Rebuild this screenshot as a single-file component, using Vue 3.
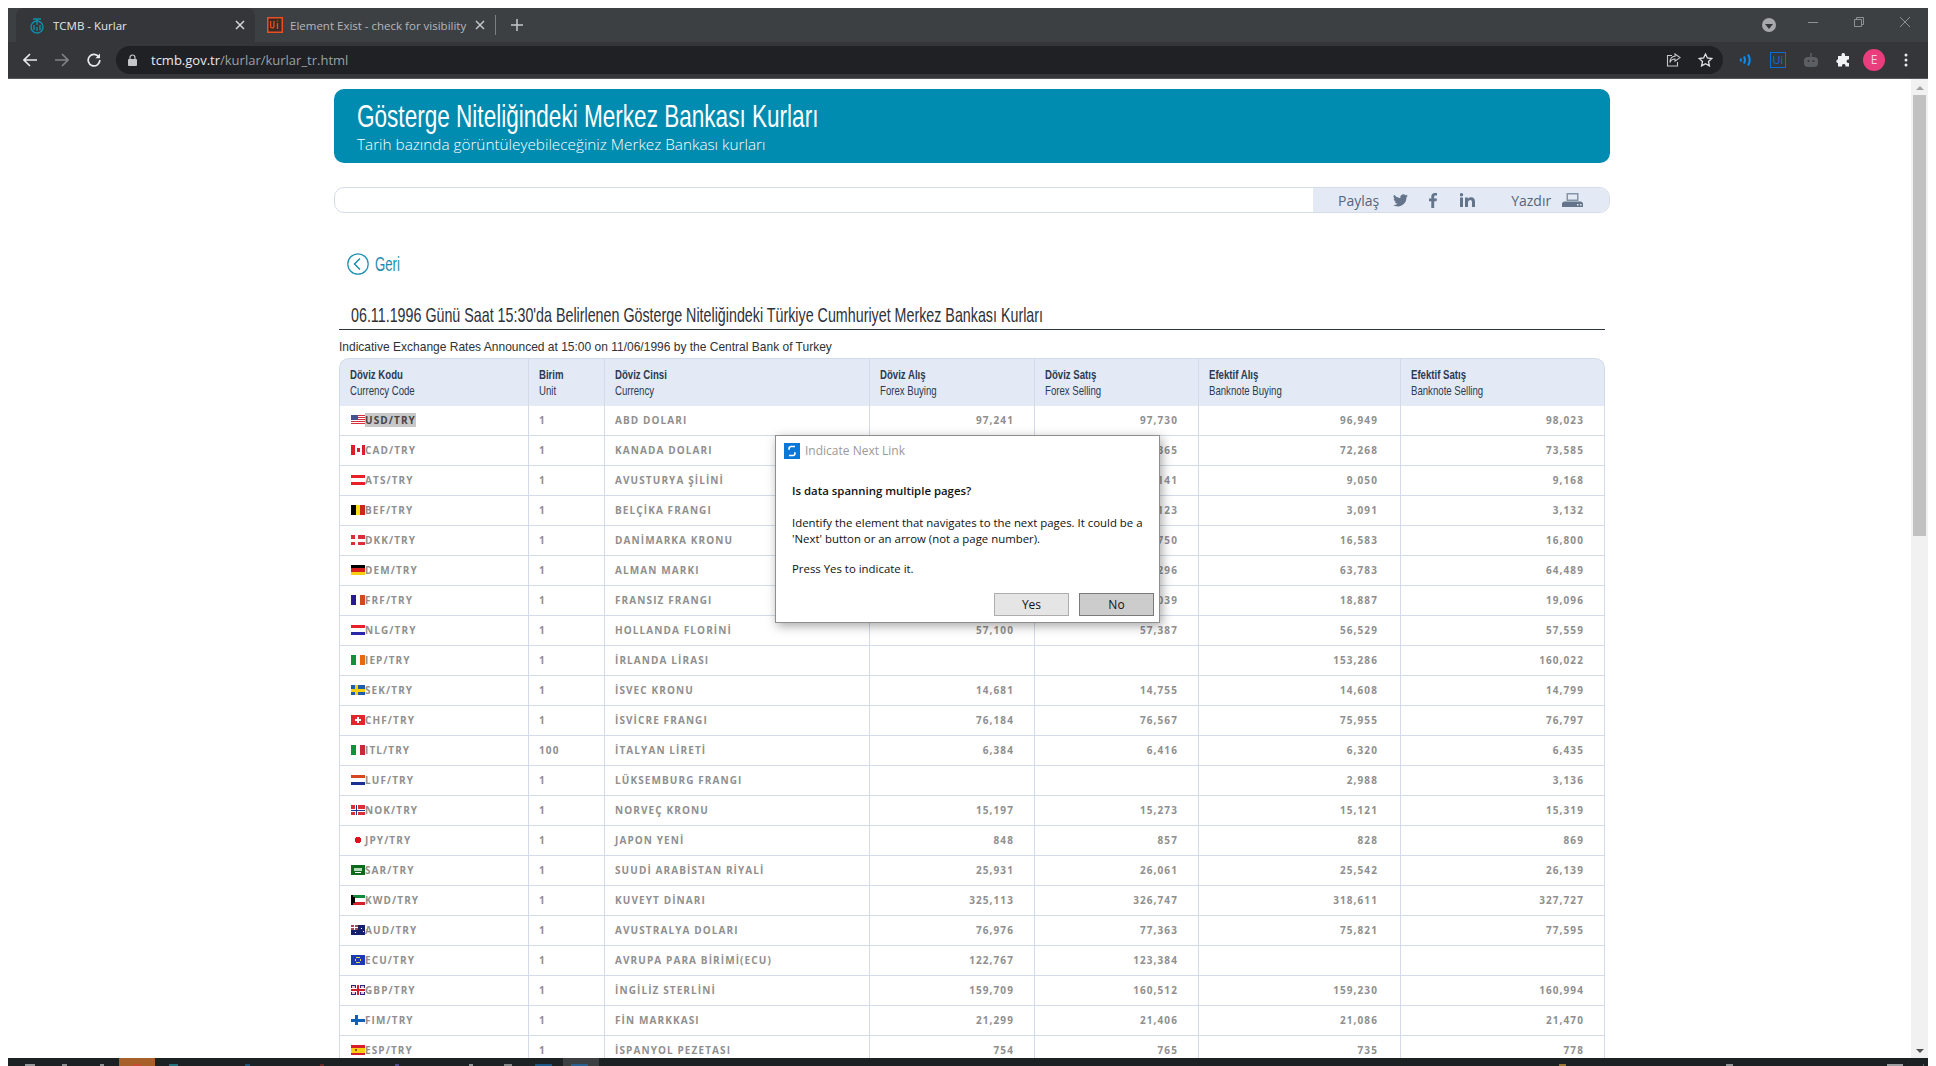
<template>
  <div class="window">
    <header class="chrome">
      <div class="tabstrip">
        <div class="tab active">
          <svg class="favicon" width="18" height="18" viewBox="0 0 18 18" fill="none" stroke="#0e8fa8" stroke-width="1.4">
            <circle cx="9" cy="11" r="6" />
            <path d="M5 3h8M9 3v6M6 9v5M12 9v5M9 11v4" />
          </svg>
          <span class="tab-title">TCMB - Kurlar</span>
          <svg class="tab-x" width="10" height="10" viewBox="0 0 10 10" stroke="#d5d7da" stroke-width="1.5"><path d="M1 1l8 8M9 1l-8 8" /></svg>
        </div>
        <div class="tab">
          <svg class="favicon" width="16" height="16" viewBox="0 0 16 16">
            <rect x="0.75" y="0.75" width="14.5" height="14.5" fill="#3b2a22" stroke="#e8501f" stroke-width="1.5" />
            <path d="M3.6 4v5.2c0 2.2 3.4 2.2 3.4 0V4" fill="none" stroke="#e8501f" stroke-width="1.3" />
            <path d="M10.5 6v6M10.5 3.6v1" fill="none" stroke="#e8501f" stroke-width="1.3" />
          </svg>
          <span class="tab-title dim">Element Exist - check for visibility</span>
          <svg class="tab-x" width="10" height="10" viewBox="0 0 10 10" stroke="#c4c7ca" stroke-width="1.5"><path d="M1 1l8 8M9 1l-8 8" /></svg>
        </div>
        <span class="tab-sep"></span>
        <svg class="new-tab" width="12" height="12" viewBox="0 0 12 12" stroke="#c4c7ca" stroke-width="1.5"><path d="M6 0v12M0 6h12" /></svg>
        <div class="win-controls">
          <span class="media-btn"><i></i></span>
          <svg width="10" height="10" viewBox="0 0 10 10" stroke="#8e9194"><path d="M0 5.5h10" /></svg>
          <svg width="10" height="10" viewBox="0 0 10 10" fill="none" stroke="#8e9194"><path d="M.5 2.5h7v7h-7zM2.5 2.5v-2h7v7h-2" /></svg>
          <svg width="10" height="10" viewBox="0 0 10 10" stroke="#8e9194"><path d="M0 0l10 10M10 0L0 10" /></svg>
        </div>
      </div>
      <div class="toolbar">
        <svg width="14" height="14" viewBox="0 0 14 14" fill="none" stroke="#e8eaed" stroke-width="1.6"><path d="M14 7H1.5M7 1L1 7l6 6" /></svg>
        <svg width="14" height="14" viewBox="0 0 14 14" fill="none" stroke="#7f8388" stroke-width="1.6"><path d="M0 7h12.5M7 1l6 6-6 6" /></svg>
        <svg width="14" height="14" viewBox="0 0 14 14" fill="none" stroke="#e8eaed" stroke-width="1.7"><path d="M12 4.2A5.8 5.8 0 1 0 12.8 7" /><path d="M13 .6v4.6H8.4z" fill="#e8eaed" stroke="none" /></svg>
        <div class="omnibox">
          <svg width="9" height="12" viewBox="0 0 9 12"><path d="M2 5V3.5a2.500 2.500 0 0 1 5 0V5" fill="none" stroke="#c4c7ca" stroke-width="1.2" /><rect y="5" width="9" height="7" rx="1" fill="#c4c7ca" /></svg>
          <span class="url"><b>tcmb.gov.tr</b>/kurlar/kurlar_tr.html</span>
          <svg class="share" width="15" height="14" viewBox="0 0 15 14" fill="none" stroke="#c4c7ca" stroke-width="1.1"><path d="M6 2.5H1.5v10.5h10V9" /><path d="M9 1l5 3.6-5 3.6V6C6.500 6 4.800 7 4 9.500 4 6 6 3.500 9 3.300z" /></svg>
          <svg width="15" height="14" viewBox="0 0 15 14" fill="none" stroke="#dfe1e4" stroke-width="1.3"><path d="M7.500 1l1.900 4 4.400.5-3.300 3 .9 4.400-3.900-2.200-3.900 2.200.9-4.400-3.300-3L5.600 5z" /></svg>
        </div>
        <div class="extensions">
          <svg width="14" height="14" viewBox="0 0 14 14" fill="none" stroke="#0a8cf0" stroke-width="2"><path d="M1.500 5.500q1 1.500 0 3M5 3.500q2 3.500 0 7M9 1.500q3.500 5.500 0 11" /></svg>
          <span class="ui-ext">Ui</span>
          <svg width="16" height="16" viewBox="0 0 16 16"><rect x="1" y="5" width="14" height="10" rx="4" fill="#5b5e62" /><rect x="7.200" y="1" width="1.600" height="4" fill="#5b5e62" /><circle cx="5.500" cy="9" r="1" fill="#35363a" /><circle cx="10.500" cy="9" r="1" fill="#35363a" /></svg>
          <svg width="15" height="15" viewBox="0 0 15 15" fill="#f1f3f4"><path d="M5.500 1.500a1.800 1.800 0 0 1 3.500 0V3h4v3.500h-1a1.800 1.800 0 0 0 0 3.500h1V13.500H9.500v-1a1.800 1.800 0 0 0-3.500 0v1H2V10h-.3a1.800 1.800 0 0 1 0-3.500H2V3h3.500z" /></svg>
          <span class="avatar">E</span>
          <svg class="menu-dots" width="4" height="14" viewBox="0 0 4 14" fill="#e8eaed"><circle cx="2" cy="2" r="1.500" /><circle cx="2" cy="7" r="1.500" /><circle cx="2" cy="12" r="1.500" /></svg>
        </div>
      </div>
    </header>

    <div class="viewport">
      <main class="page">
        <section class="banner">
          <h1>Gösterge Niteliğindeki Merkez Bankası Kurları</h1>
          <p>Tarih bazında görüntüleyebileceğiniz Merkez Bankası kurları</p>
        </section>

        <div class="sharebar">
          <div class="share-tools">
            <span>Paylaş</span>
            <svg class="tw" width="15" height="13" viewBox="0 0 24 20" fill="#64748a"><path d="M24 2.400a9.800 9.800 0 0 1-2.800.8A4.900 4.900 0 0 0 23.300.500a9.800 9.800 0 0 1-3.100 1.200 4.900 4.900 0 0 0-8.400 4.500A14 14 0 0 1 1.700.900a4.900 4.900 0 0 0 1.500 6.600 4.900 4.900 0 0 1-2.200-.6c0 2.400 1.700 4.400 3.900 4.900a4.900 4.900 0 0 1-2.200.1 4.900 4.900 0 0 0 4.600 3.400A9.900 9.900 0 0 1 0 17.300 14 14 0 0 0 21.500 4.900 10 10 0 0 0 24 2.400z" /></svg>
            <svg class="fb" width="8" height="15" viewBox="0 0 8 15" fill="#64748a"><path d="M2.300 15V8.300H0V5.600h2.300V3.700C2.300 1.300 3.700 0 5.800 0H8v2.600H6.500c-1 0-1.300.6-1.300 1.300v1.700H8l-.4 2.700H5.200V15z" /></svg>
            <svg class="in" width="15" height="14" viewBox="0 0 15 14" fill="#64748a"><rect y="4.500" width="3" height="9.500" /><circle cx="1.500" cy="1.700" r="1.700" /><path d="M5 4.500h2.900v1.300c.6-1 1.700-1.600 3-1.600 2.900 0 4.100 1.700 4.100 4.500V14h-3V9.200c0-1.300-.4-2.300-1.600-2.300S8 7.900 8 9.200V14H5z" /></svg>
            <span class="print-label">Yazdır</span>
            <svg width="21" height="14" viewBox="0 0 21 14"><path d="M4.500 0h12v8h-12z" fill="#8593a6" /><path d="M6 1.500h9v5H6z" fill="#e4eaf5" /><path d="M2 8.500h17l2 1.500v4H0v-4z" fill="#64748a" /><rect x="15" y="11" width="1.500" height="1.500" fill="#e4eaf5" /><rect x="18" y="11" width="1.500" height="1.500" fill="#e4eaf5" /></svg>
          </div>
        </div>

        <a class="back">
          <svg width="22" height="22" viewBox="0 0 22 22" fill="none" stroke="#1a8db0" stroke-width="1.200"><circle cx="11" cy="11" r="10.200" /><path d="M13 5.500L7.500 11l5.500 5.500" stroke-width="1.500" /></svg>
          <span>Geri</span>
        </a>

        <div class="rate-title">
          <h2>06.11.1996 Günü Saat 15:30'da Belirlenen Gösterge Niteliğindeki Türkiye Cumhuriyet Merkez Bankası Kurları</h2>
        </div>
        <p class="rate-sub">Indicative Exchange Rates Announced at 15:00 on 11/06/1996 by the Central Bank of Turkey</p>

        <table class="rates">
          <colgroup>
            <col v-for="w in colWidths" :key="w.id" :style="{ width: w.px + 'px' }" />
          </colgroup>
          <thead>
            <tr>
              <th v-for="h in headers" :key="h.tr">
                <strong>{{ h.tr }}</strong>
                <span>{{ h.en }}</span>
              </th>
            </tr>
          </thead>
          <tbody>
            <tr v-for="r in rows" :key="r.code">
              <td class="code">
                <div class="code-cell">
                  <svg class="flag" width="14" height="10" viewBox="0 0 14 10" shape-rendering="crispEdges">
                    <rect v-for="(s, i) in flags[r.code]" :key="i" :x="s[0]" :y="s[1]" :width="s[2]" :height="s[3]" :fill="s[4]" />
                  </svg>
                  <span :class="{ picked: r.code === 'USD' }">{{ r.code }}/TRY</span>
                </div>
              </td>
              <td>{{ r.unit }}</td>
              <td>{{ r.name }}</td>
              <td class="num">{{ r.fb }}</td>
              <td class="num">{{ r.fs }}</td>
              <td class="num">{{ r.bb }}</td>
              <td class="num">{{ r.bs }}</td>
            </tr>
          </tbody>
        </table>
      </main>

      <div class="scrollbar">
        <span class="arrow up"></span>
        <span class="thumb"></span>
        <span class="arrow down"></span>
      </div>

      <div class="dialog">
        <div class="dialog-title">
          <svg width="16" height="16" viewBox="0 0 16 16">
            <rect width="16" height="16" fill="#0a78d8" />
            <path d="M11 3.500H7a2 2 0 0 0-1.500 3.300M5 12.500h4a2 2 0 0 0 1.500-3.300" fill="none" stroke="#fff" stroke-width="1.700" />
          </svg>
          <span>Indicate Next Link</span>
        </div>
        <div class="dialog-body">
          <p><b>Is data spanning multiple pages?</b></p>
          <p>Identify the element that navigates to the next pages. It could be a 'Next' button or an arrow (not a page number).</p>
          <p>Press Yes to indicate it.</p>
        </div>
        <div class="dialog-actions">
          <button>Yes</button>
          <button class="focused">No</button>
        </div>
      </div>
    </div>

    <footer class="taskbar">
      <span class="task-cell orange"></span>
      <span class="task-cell open"></span>
      <span
        v-for="b in trayBits"
        :key="b.x"
        class="task-bit"
        :style="{ left: b.x + 'px', width: b.w + 'px', background: b.c }"
      ></span>
    </footer>
  </div>
</template>

<script setup>
const colWidths = [
  { id: 'code', px: 190 },
  { id: 'unit', px: 76 },
  { id: 'name', px: 265 },
  { id: 'fb', px: 165 },
  { id: 'fs', px: 164 },
  { id: 'bb', px: 202 },
  { id: 'bs', px: 204 }
]

const headers = [
  { tr: 'Döviz Kodu', en: 'Currency Code' },
  { tr: 'Birim', en: 'Unit' },
  { tr: 'Döviz Cinsi', en: 'Currency' },
  { tr: 'Döviz Alış', en: 'Forex Buying' },
  { tr: 'Döviz Satış', en: 'Forex Selling' },
  { tr: 'Efektif Alış', en: 'Banknote Buying' },
  { tr: 'Efektif Satış', en: 'Banknote Selling' }
]

const rows = [
  { code: 'USD', unit: 1, name: 'ABD DOLARI', fb: '97,241', fs: '97,730', bb: '96,949', bs: '98,023' },
  { code: 'CAD', unit: 1, name: 'KANADA DOLARI', fb: '72,000', fs: '72,365', bb: '72,268', bs: '73,585' },
  { code: 'ATS', unit: 1, name: 'AVUSTURYA ŞİLİNİ', fb: '9,095', fs: '9,141', bb: '9,050', bs: '9,168' },
  { code: 'BEF', unit: 1, name: 'BELÇİKA FRANGI', fb: '3,107', fs: '3,123', bb: '3,091', bs: '3,132' },
  { code: 'DKK', unit: 1, name: 'DANİMARKA KRONU', fb: '16,666', fs: '16,750', bb: '16,583', bs: '16,800' },
  { code: 'DEM', unit: 1, name: 'ALMAN MARKI', fb: '64,000', fs: '64,296', bb: '63,783', bs: '64,489' },
  { code: 'FRF', unit: 1, name: 'FRANSIZ FRANGI', fb: '18,980', fs: '19,039', bb: '18,887', bs: '19,096' },
  { code: 'NLG', unit: 1, name: 'HOLLANDA FLORİNİ', fb: '57,100', fs: '57,387', bb: '56,529', bs: '57,559' },
  { code: 'IEP', unit: 1, name: 'İRLANDA LİRASI', fb: '', fs: '', bb: '153,286', bs: '160,022' },
  { code: 'SEK', unit: 1, name: 'İSVEC KRONU', fb: '14,681', fs: '14,755', bb: '14,608', bs: '14,799' },
  { code: 'CHF', unit: 1, name: 'İSVİCRE FRANGI', fb: '76,184', fs: '76,567', bb: '75,955', bs: '76,797' },
  { code: 'ITL', unit: 100, name: 'İTALYAN LİRETİ', fb: '6,384', fs: '6,416', bb: '6,320', bs: '6,435' },
  { code: 'LUF', unit: 1, name: 'LÜKSEMBURG FRANGI', fb: '', fs: '', bb: '2,988', bs: '3,136' },
  { code: 'NOK', unit: 1, name: 'NORVEÇ KRONU', fb: '15,197', fs: '15,273', bb: '15,121', bs: '15,319' },
  { code: 'JPY', unit: 1, name: 'JAPON YENİ', fb: '848', fs: '857', bb: '828', bs: '869' },
  { code: 'SAR', unit: 1, name: 'SUUDİ ARABİSTAN RİYALİ', fb: '25,931', fs: '26,061', bb: '25,542', bs: '26,139' },
  { code: 'KWD', unit: 1, name: 'KUVEYT DİNARI', fb: '325,113', fs: '326,747', bb: '318,611', bs: '327,727' },
  { code: 'AUD', unit: 1, name: 'AVUSTRALYA DOLARI', fb: '76,976', fs: '77,363', bb: '75,821', bs: '77,595' },
  { code: 'ECU', unit: 1, name: 'AVRUPA PARA BİRİMİ(ECU)', fb: '122,767', fs: '123,384', bb: '', bs: '' },
  { code: 'GBP', unit: 1, name: 'İNGİLİZ STERLİNİ', fb: '159,709', fs: '160,512', bb: '159,230', bs: '160,994' },
  { code: 'FIM', unit: 1, name: 'FİN MARKKASI', fb: '21,299', fs: '21,406', bb: '21,086', bs: '21,470' },
  { code: 'ESP', unit: 1, name: 'İSPANYOL PEZETASI', fb: '754', fs: '765', bb: '735', bs: '778' }
]

// each piece: x, y, w, h, colour on a 14x10 flag
const hstripes = (...c) => c.map((col, i) => [0, (i * 10) / c.length, 14, 10 / c.length, col])
const vstripes = (...c) => c.map((col, i) => [(i * 14) / c.length, 0, 14 / c.length, 10, col])
const nordic = (bg, cross, inner) => {
  const out = [[0, 0, 14, 10, bg], [4, 0, 3, 10, cross], [0, 3.5, 14, 3, cross]]
  if (inner) out.push([5, 0, 1, 10, inner], [0, 4.5, 14, 1, inner])
  return out
}

const flags = {
  USD: [...hstripes('#d8303a', '#fff', '#d8303a', '#fff', '#d8303a', '#fff', '#d8303a', '#fff', '#d8303a', '#fff'), [0, 0, 7, 5, '#4a4f8f']],
  CAD: [[0, 0, 14, 10, '#fff'], [0, 0, 3.5, 10, '#d9202a'], [10.5, 0, 3.5, 10, '#d9202a'], [5.5, 3, 3, 4, '#d9202a']],
  ATS: hstripes('#e8202a', '#fff', '#e8202a'),
  BEF: vstripes('#000', '#f7e018', '#c8281e'),
  DKK: nordic('#d9303a', '#fff'),
  DEM: hstripes('#000', '#d82020', '#f8cf10'),
  FRF: vstripes('#2a1a90', '#fff', '#d04a20'),
  NLG: hstripes('#e8202a', '#fff', '#2a2aa8'),
  IEP: vstripes('#12913c', '#fff', '#e86a10'),
  SEK: nordic('#1f5fa8', '#f7d010'),
  CHF: [[0, 0, 14, 10, '#e2262c'], [6, 2, 2, 6, '#fff'], [4, 4, 6, 2, '#fff']],
  ITL: vstripes('#12913c', '#fff', '#c8283a'),
  LUF: hstripes('#d8481e', '#fff', '#1a2f8f'),
  NOK: nordic('#d9303a', '#fff', '#1a3a8f'),
  JPY: [[5, 2, 4, 6, '#e01020'], [4, 3, 6, 4, '#e01020']],
  SAR: [[0, 0, 14, 10, '#0c6a1c'], [3, 3, 8, 3, '#b8d8b8'], [4, 7, 6, 1, '#fff']],
  KWD: [...hstripes('#0f8a3a', '#fff', '#d8202a'), [0, 0, 2, 10, '#000'], [2, 2, 1.5, 6, '#000']],
  AUD: [[0, 0, 14, 10, '#14206e'], [0, 0, 7, 5, '#b04060'], [3, 0, 1, 5, '#fff'], [0, 2, 7, 1, '#fff'], [10, 3, 1, 1, '#fff'], [12, 6, 1, 1, '#fff'], [4, 7, 1, 1, '#fff']],
  ECU: [[0, 0, 14, 10, '#1a3ab8'], [5, 2, 4, 1, '#e8d840'], [4, 4, 1, 2, '#e8d840'], [9, 4, 1, 2, '#e8d840'], [5, 7, 4, 1, '#e8d840']],
  GBP: [[0, 0, 14, 10, '#2a2a78'], [1, 1, 3, 2, '#e6c8d0'], [10, 1, 3, 2, '#e6c8d0'], [1, 7, 3, 2, '#e6c8d0'], [10, 7, 3, 2, '#e6c8d0'], [5, 0, 4, 10, '#fff'], [0, 3, 14, 4, '#fff'], [6, 0, 2, 10, '#d0202a'], [0, 4, 14, 2, '#d0202a']],
  FIM: [[0, 3.5, 14, 3, '#1060b8'], [4, 0, 3, 10, '#1060b8']],
  ESP: [[0, 0, 14, 10, '#d8202a'], [0, 2.5, 14, 5, '#f8d010'], [4, 4, 2, 2, '#a04020']]
}

// tops of the taskbar icons that still show at the screen edge
const trayBits = [
  { x: 17, w: 10, c: '#e8e8e8' },
  { x: 54, w: 5, c: '#d8d8d8' },
  { x: 92, w: 4, c: '#d8d8d8' },
  { x: 125, w: 8, c: '#d8403a' },
  { x: 161, w: 9, c: '#2aa6b8' },
  { x: 237, w: 5, c: '#1a78c8' },
  { x: 312, w: 4, c: '#a02a2a' },
  { x: 387, w: 4, c: '#7a6ad8' },
  { x: 461, w: 4, c: '#e0e0e0' },
  { x: 496, w: 8, c: '#c8c8c8' },
  { x: 527, w: 17, c: '#1a78c8' },
  { x: 563, w: 17, c: '#1a78c8' },
  { x: 1551, w: 7, c: '#e8b030' },
  { x: 1718, w: 7, c: '#e0e0e0' },
  { x: 1879, w: 16, c: '#f0f0f0' },
  { x: 1915, w: 1, c: '#909090' }
]
</script>

<style>
html, body {
  margin: 0;
  background: #fff;
  overflow: hidden;
}
</style>

<style scoped>
.window {
  box-sizing: border-box;
  height: 1066px;
  padding: 8px 8px 0;
  display: flex;
  flex-direction: column;
  font-family: "Open Sans", sans-serif;
  background: #fff;
}

.chrome {
  height: 71px;
  flex: none;
  background: #3c4043;
  border-bottom: 1px solid #55585c;
  box-sizing: border-box;
}

.tabstrip {
  height: 34px;
  display: flex;
  align-items: center;
  padding-left: 8px;
}

.tab {
  box-sizing: border-box;
  height: 34px;
  width: 239px;
  display: flex;
  align-items: center;
  padding: 0 10px 0 12px;
  gap: 7px;
}

.tab.active {
  background: #35363a;
  border-radius: 8px 8px 0 0;
}

.tab + .tab {
  width: 240px;
}

.tab-title {
  flex: 1;
  color: #e3e5e8;
  font-size: 11.5px;
  white-space: nowrap;
  overflow: hidden;
}

.tab-title.dim {
  color: #b4b7ba;
}

.tab-sep {
  width: 1px;
  height: 20px;
  background: #7b7e82;
}

.new-tab {
  margin-left: 15px;
}

.win-controls {
  margin-left: auto;
  display: flex;
  align-items: center;
  height: 34px;
  padding-right: 18px;
  gap: 36px;
}

.win-controls svg {
  margin-top: -6px;
}

.media-btn {
  width: 14px;
  height: 14px;
  border-radius: 50%;
  background: #a6a8ab;
  display: flex;
  align-items: center;
  justify-content: center;
  margin-right: -4px;
}

.media-btn i {
  border-top: 5px solid #35363a;
  border-left: 4px solid transparent;
  border-right: 4px solid transparent;
  margin-top: 2px;
}

.toolbar {
  height: 36px;
  background: #35363a;
  display: flex;
  align-items: center;
  padding-left: 15px;
  gap: 18px;
}

.omnibox {
  width: 1607px;
  margin-left: -3px;
  height: 28px;
  box-sizing: border-box;
  border-radius: 14px;
  background: #202124;
  display: flex;
  align-items: center;
  padding: 0 10px 0 12px;
}

.url {
  margin-left: 14px;
  flex: 1;
  color: #9aa0a6;
  font-size: 13px;
}

.url b {
  color: #e8eaed;
  font-weight: 400;
}

.share {
  margin-right: 17px;
}

.extensions {
  display: flex;
  align-items: center;
  gap: 17px;
  margin-left: -2px;
}

.ui-ext {
  box-sizing: border-box;
  width: 16px;
  height: 16px;
  border: 1.5px solid #0a6fd8;
  color: #0a6fd8;
  font-size: 11px;
  line-height: 13px;
  text-align: center;
}

.avatar {
  width: 22px;
  height: 22px;
  margin-left: -5px;
  border-radius: 50%;
  background: #e93d7d;
  color: #f5d5e2;
  font-size: 12px;
  line-height: 22px;
  text-align: center;
}

.menu-dots {
  margin-left: 2px;
}

.viewport {
  position: relative;
  flex: 1;
  min-height: 0;
  display: flex;
  overflow: hidden;
}

.page {
  flex: 1;
  min-width: 0;
  box-sizing: border-box;
  padding: 10px 0 0 326px;
  overflow: hidden;
}

.banner {
  width: 1276px;
  height: 74px;
  box-sizing: border-box;
  padding: 8px 0 0 23px;
  background: #008bb0;
  border-radius: 10px;
  color: #fff;
}

/* no Oswald on this box, so the headings are squeezed Liberation Sans */
.banner h1 {
  margin: 0;
  font-family: "Liberation Sans", sans-serif;
  font-weight: 400;
  font-size: 32px;
  line-height: 38px;
  white-space: nowrap;
  transform: scaleX(0.705);
  transform-origin: 0 50%;
}

.banner p {
  margin: 0;
  font-size: 15.3px;
  font-weight: 300;
  line-height: 18px;
}

.sharebar {
  width: 1276px;
  height: 26px;
  margin-top: 24px;
  box-sizing: border-box;
  border: 1px solid #d5dce8;
  border-radius: 10px;
  display: flex;
  justify-content: flex-end;
  overflow: hidden;
}

.share-tools {
  width: 296px;
  box-sizing: border-box;
  background: #e4eaf5;
  display: flex;
  align-items: center;
  padding-left: 25px;
  color: #56657a;
  font-size: 14px;
}

.tw {
  margin-left: 14px;
}

.fb {
  margin-left: 21px;
}

.in {
  margin-left: 23px;
}

.print-label {
  margin-left: 36px;
  margin-right: 11px;
}

.back {
  display: flex;
  align-items: center;
  gap: 6px;
  margin: 40px 0 0 13px;
  height: 22px;
  color: #1a8db0;
  font-family: "Liberation Sans", sans-serif;
  font-size: 20px;
}

.back span {
  transform: scaleX(0.66);
  transform-origin: 0 50%;
}

.rate-title {
  box-sizing: border-box;
  width: 1266px;
  margin: 27px 0 0 5px;
  padding: 0 0 2px 12px;
  height: 28px;
  border-bottom: 1px solid #2f3640;
}

.rate-title h2 {
  margin: 0;
  font-family: "Liberation Sans", sans-serif;
  font-weight: 400;
  font-size: 21px;
  line-height: 26px;
  color: #2d3238;
  white-space: nowrap;
  transform: scaleX(0.68);
  transform-origin: 0 50%;
}

.rate-sub {
  margin: 8px 0 0 5px;
  height: 20px;
  font-family: "Liberation Sans", sans-serif;
  font-size: 13.5px;
  line-height: 18px;
  color: #2d3238;
  white-space: nowrap;
  transform: scaleX(0.889);
  transform-origin: 0 50%;
}

.rates {
  margin-left: 5px;
  width: 1266px;
  table-layout: fixed;
  border-collapse: separate;
  border-spacing: 0;
}

.rates th {
  height: 48px;
  box-sizing: border-box;
  padding: 0 10px;
  background: #e4eaf5;
  border-top: 1px solid #d3dbe8;
  border-right: 1px solid #d3dbe8;
  text-align: left;
  font-family: "Liberation Sans", sans-serif;
  font-size: 13px;
  line-height: 16px;
  color: #2c3a52;
}

.rates th:first-child {
  border-left: 1px solid #d3dbe8;
  border-top-left-radius: 10px;
}

.rates th:last-child {
  border-top-right-radius: 10px;
}

.rates th strong,
.rates th span {
  display: block;
  white-space: nowrap;
  transform: scaleX(0.74);
  transform-origin: 0 50%;
}

.rates th span {
  font-weight: 400;
}

.rates td {
  height: 30px;
  box-sizing: border-box;
  padding: 0 10px 2px;
  border-right: 1px solid #d3dbe8;
  border-bottom: 1px solid #d3dbe8;
  font-size: 10px;
  font-weight: 700;
  letter-spacing: 1.1px;
  color: #8f8f8f;
  white-space: nowrap;
}

.rates td:first-child {
  border-left: 1px solid #d3dbe8;
}

.rates td.num {
  text-align: right;
  padding-right: 20px;
}

.rates td.num:nth-child(6) {
  padding-right: 22px;
}

.code-cell {
  display: flex;
  align-items: center;
  margin-left: 1px;
}

.flag {
  flex: none;
}

.picked {
  background: #c8c8c8;
  color: #444;
  line-height: 14px;
}

.scrollbar {
  flex: none;
  width: 17px;
  background: #f1f1f1;
  display: flex;
  flex-direction: column;
  align-items: center;
}

.arrow {
  flex: none;
  width: 0;
  height: 0;
  border-left: 4px solid transparent;
  border-right: 4px solid transparent;
}

.arrow.up {
  margin: 7px 0 5px;
  border-bottom: 4px solid #a3a3a3;
}

.arrow.down {
  margin-top: auto;
  margin-bottom: 5px;
  border-top: 4px solid #505050;
}

.thumb {
  width: 13px;
  height: 441px;
  background: #c1c1c1;
}

.dialog {
  position: absolute;
  left: 767px;
  top: 356px;
  width: 385px;
  height: 188px;
  box-sizing: border-box;
  background: #fff;
  border: 1px solid #8f8f8f;
  box-shadow: 2px 3px 10px rgba(0, 0, 0, 0.35);
  color: #111;
  font-size: 11.4px;
  line-height: 16px;
  display: flex;
  flex-direction: column;
}

.dialog-title {
  height: 30px;
  display: flex;
  align-items: center;
  gap: 5px;
  padding-left: 8px;
  color: #9a9a9a;
  font-size: 12px;
}

.dialog-body {
  padding: 18px 16px 0;
  flex: 1;
}

.dialog-body p {
  margin: 0 0 16px;
}

.dialog-body p:nth-child(2) {
  margin-bottom: 14px;
}

.dialog-body b {
  font-weight: 600;
}

.dialog-actions {
  display: flex;
  justify-content: flex-end;
  gap: 10px;
  padding: 0 5px 6px 0;
}

.dialog-actions button {
  width: 75px;
  height: 23px;
  box-sizing: border-box;
  padding: 0;
  border: 1px solid #adadad;
  background: #e5e5e5;
  color: #111;
  font: 12px "Open Sans", sans-serif;
}

.dialog-actions .focused {
  background: #ccc;
  border-color: #7a7a7a;
}

.taskbar {
  height: 8px;
  flex: none;
  background: #1c2124;
  position: relative;
}

.task-cell {
  position: absolute;
  top: 0;
  height: 8px;
}

.task-cell.orange {
  left: 111px;
  width: 36px;
  background: #a8602a;
}

.task-cell.open {
  left: 555px;
  width: 36px;
  background: #3c4043;
}

.task-bit {
  position: absolute;
  bottom: 0;
  height: 2px;
  opacity: 0.6;
}
</style>
